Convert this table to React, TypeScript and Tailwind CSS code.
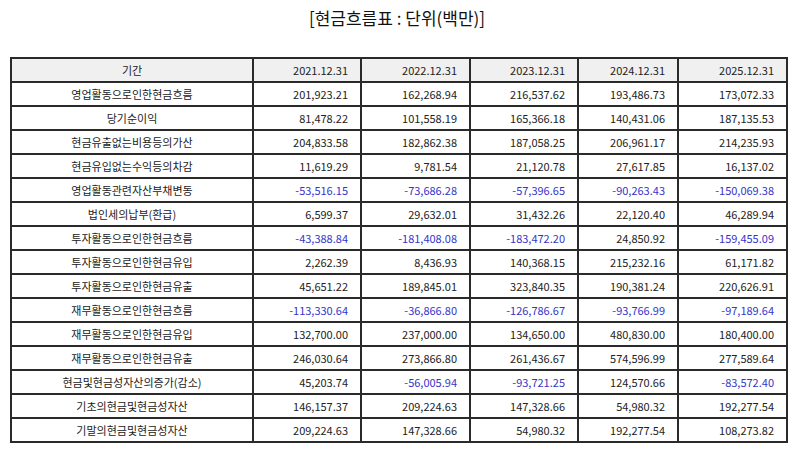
import React from 'react';

const years = ['2021.12.31', '2022.12.31', '2023.12.31', '2024.12.31', '2025.12.31'];

// 항목명, 연도별 값
const rows: [string, string[]][] = [
    ['영업활동으로인한현금흐름', ['201,923.21', '162,268.94', '216,537.62', '193,486.73', '173,072.33']],
    ['당기순이익', ['81,478.22', '101,558.19', '165,366.18', '140,431.06', '187,135.53']],
    ['현금유출없는비용등의가산', ['204,833.58', '182,862.38', '187,058.25', '206,961.17', '214,235.93']],
    ['현금유입없는수익등의차감', ['11,619.29', '9,781.54', '21,120.78', '27,617.85', '16,137.02']],
    ['영업활동관련자산부채변동', ['-53,516.15', '-73,686.28', '-57,396.65', '-90,263.43', '-150,069.38']],
    ['법인세의납부(환급)', ['6,599.37', '29,632.01', '31,432.26', '22,120.40', '46,289.94']],
    ['투자활동으로인한현금흐름', ['-43,388.84', '-181,408.08', '-183,472.20', '24,850.92', '-159,455.09']],
    ['투자활동으로인한현금유입', ['2,262.39', '8,436.93', '140,368.15', '215,232.16', '61,171.82']],
    ['투자활동으로인한현금유출', ['45,651.22', '189,845.01', '323,840.35', '190,381.24', '220,626.91']],
    ['재무활동으로인한현금흐름', ['-113,330.64', '-36,866.80', '-126,786.67', '-93,766.99', '-97,189.64']],
    ['재무활동으로인한현금유입', ['132,700.00', '237,000.00', '134,650.00', '480,830.00', '180,400.00']],
    ['재무활동으로인한현금유출', ['246,030.64', '273,866.80', '261,436.67', '574,596.99', '277,589.64']],
    ['현금및현금성자산의증가(감소)', ['45,203.74', '-56,005.94', '-93,721.25', '124,570.66', '-83,572.40']],
    ['기초의현금및현금성자산', ['146,157.37', '209,224.63', '147,328.66', '54,980.32', '192,277.54']],
    ['기말의현금및현금성자산', ['209,224.63', '147,328.66', '54,980.32', '192,277.54', '108,273.82']],
];

const colWidths = ['w-[242px]', 'w-[108px]', 'w-[109px]', 'w-[108px]', 'w-[100px]', 'w-[109px]'];

export default function App() {
    return (
        <div className="w-[794px] h-[452px] bg-white text-[#222] font-['Noto_Sans_CJK_KR','Noto_Sans',sans-serif]">
            <h1 className="pt-[4px] h-[57px] text-center text-[17px] leading-[28px] text-[#111]">[현금흐름표 : 단위(백만)]</h1>
            <table className="ml-[10px] w-[776px] table-fixed border-collapse text-[11px]">
                <colgroup>
                    {colWidths.map((w, i) => <col key={i} className={w} />)}
                </colgroup>
                <thead>
                    <tr className="h-[24px] bg-[#f0f0f0]">
                        <th className="border-2 border-[#2a2a2a] font-normal text-center">기간</th>
                        {years.map(y => (
                            <th key={y} className="border-2 border-[#2a2a2a] font-normal text-right pr-[12px]">{y}</th>
                        ))}
                    </tr>
                </thead>
                <tbody>
                    {rows.map(([label, vals]) => (
                        <tr key={label} className="h-[24px]">
                            <td className="border-2 border-[#2a2a2a] text-center">{label}</td>
                            {vals.map((v, i) => (
                                <td key={i} className={`border-2 border-[#2a2a2a] text-right pr-[12px] ${v.startsWith('-') ? 'text-[#3434c8]' : ''}`}>{v}</td>
                            ))}
                        </tr>
                    ))}
                </tbody>
            </table>
        </div>
    );
}
